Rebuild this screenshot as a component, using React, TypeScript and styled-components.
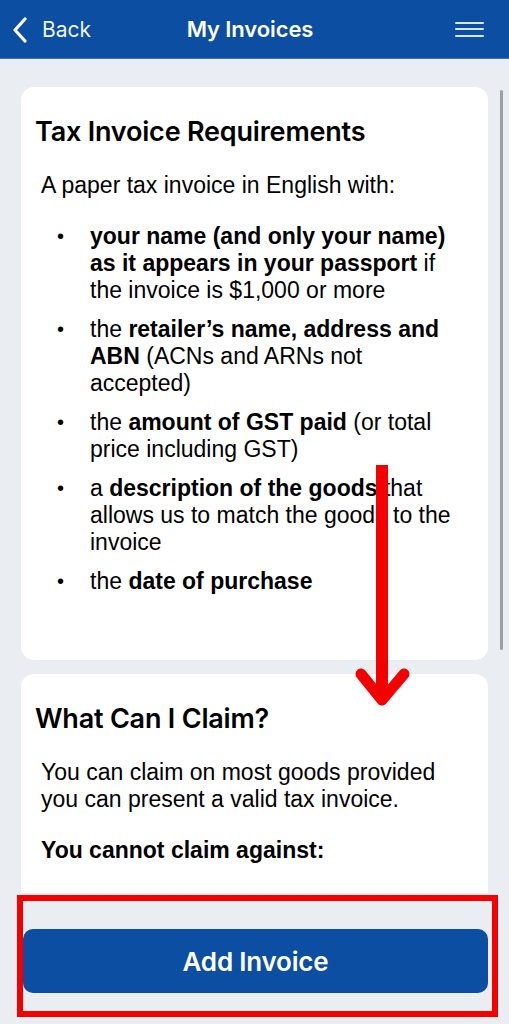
import React from 'react';
import styled, { createGlobalStyle } from 'styled-components';

const GlobalStyle = createGlobalStyle`
    * { box-sizing: border-box; }
    html, body {
        margin: 0;
        padding: 0;
        background: #eaedf1;
    }
`;

const requirements = [
    { lead: '', bold: 'your name (and only your name) as it appears in your passport', tail: ' if the invoice is $1,000 or more' },
    { lead: 'the ', bold: 'retailer\u2019s name, address and ABN', tail: ' (ACNs and ARNs not accepted)' },
    { lead: 'the ', bold: 'amount of GST paid', tail: ' (or total price including GST)' },
    { lead: 'a ', bold: 'description of the goods', tail: ' that allows us to match the goods to the invoice' },
    { lead: 'the ', bold: 'date of purchase', tail: '' },
];

export default function App() {
    return (
        <>
            <GlobalStyle />
            <Screen>
                <TopBar>
                    <BackButton>
                        <svg width="16" height="26" viewBox="0 0 16 26">
                            <polyline points="13,2 3,13 13,24" fill="none" stroke="#fff" strokeWidth="3.2" strokeLinecap="round" strokeLinejoin="round" />
                        </svg>
                        <span>Back</span>
                    </BackButton>
                    <BarTitle>My Invoices</BarTitle>
                    <MenuButton aria-label="menu">
                        <span />
                        <span />
                        <span />
                    </MenuButton>
                </TopBar>

                <Main>
                    <Card $bottom={65}>
                        <CardTitle>Tax Invoice Requirements</CardTitle>
                        <Para>A paper tax invoice in English with:</Para>
                        <List>
                            {requirements.map((r, i) => (
                                <Item key={i}>
                                    {r.lead}<b>{r.bold}</b>{r.tail}
                                </Item>
                            ))}
                        </List>
                    </Card>
                    <Card $bottom={40}>
                        <CardTitle>What Can I Claim?</CardTitle>
                        <Para>You can claim on most goods provided you can present a valid tax invoice.</Para>
                        <Para $bold>You cannot claim against:</Para>
                    </Card>
                    <ScrollThumb />
                </Main>

                <Footer>
                    <Highlight>
                        <AddButton>Add Invoice</AddButton>
                    </Highlight>
                </Footer>

                {/* annotation arrow drawn over the page */}
                <Arrow width="60" height="250" viewBox="0 0 60 250">
                    <line x1="30" y1="0" x2="30" y2="228" stroke="#f50000" strokeWidth="12" />
                    <polyline points="9,209 30,235 52,209" fill="none" stroke="#f50000" strokeWidth="11" strokeLinecap="round" strokeLinejoin="round" />
                </Arrow>
            </Screen>
        </>
    );
}

const Screen = styled.div`
    position: relative;
    width: 509px;
    height: 1024px;
    display: flex;
    flex-direction: column;
    background: #eaedf1;
    overflow: hidden;
`;

const TopBar = styled.header`
    height: 59px;
    flex-shrink: 0;
    background: #0b4ea2;
    display: grid;
    grid-template-columns: 1fr auto 1fr;
    align-items: center;
    padding: 0 25px 0 12px;
    border-bottom: 1px solid #3d72b6;
    font-family: Inter, "Liberation Sans", sans-serif;
    color: #fff;
`;

const BackButton = styled.div`
    display: flex;
    align-items: center;
    gap: 14px;
    font-size: 21px;
    color: #eef3fb;

    svg { margin-top: 1px; }
`;

const BarTitle = styled.div`
    font-size: 22px;
    font-weight: 600;
    letter-spacing: -0.1px;
    padding-left: 4px;
`;

const MenuButton = styled.div`
    justify-self: end;
    display: flex;
    flex-direction: column;
    gap: 4.5px;
    width: 29px;

    span {
        display: block;
        height: 2px;
        border-radius: 1px;
        background: #d9e6fa;
    }
`;

const Main = styled.main`
    position: relative;
    flex: 1;
    overflow: hidden;
    padding: 28px 21px 0 21px;
    display: flex;
    flex-direction: column;
    gap: 14px;
`;

const ScrollThumb = styled.div`
    position: absolute;
    right: 6px;
    top: 31px;
    width: 3px;
    height: 560px;
    border-radius: 2px;
    background: #9c9fa4;
`;

const Card = styled.section<{ $bottom: number }>`
    flex-shrink: 0;
    background: #fff;
    border-radius: 13px;
    padding: 29px 14px ${p => p.$bottom}px 14px;
    color: #000;
`;

const CardTitle = styled.h2`
    margin: 0 0 25px 0;
    font-family: Inter, "Liberation Sans", sans-serif;
    font-size: 27px;
    line-height: 31px;
    font-weight: 600;
    letter-spacing: -0.2px;
`;

const Para = styled.p<{ $bold?: boolean }>`
    margin: 0 14px 24px 6px;
    font-family: "Liberation Sans", Arial, sans-serif;
    font-size: 23px;
    line-height: 27px;
    font-weight: ${p => (p.$bold ? 700 : 400)};
`;

const List = styled.ul`
    list-style: none;
    margin: 0 14px 0 0;
    padding: 0 0 0 55px;
    font-family: "Liberation Sans", Arial, sans-serif;
    font-size: 23px;
    line-height: 27px;
    display: flex;
    flex-direction: column;
    gap: 12px;
`;

const Item = styled.li`
    position: relative;

    &::before {
        content: '\u2022';
        position: absolute;
        left: -33px;
        top: 0;
        font-size: 20px;
    }

    b { font-weight: 700; }
`;

const Footer = styled.footer`
    height: 131px;
    flex-shrink: 0;
    padding: 2px 11px 7px 17px;
    background: #eaedf1;
`;

const Highlight = styled.div`
    height: 122px;
    border: 6px solid #f50000;
    padding: 28px 4px 0 0;
`;

const AddButton = styled.button`
    display: block;
    width: 100%;
    height: 64px;
    border: none;
    border-radius: 10px;
    background: #0b4ea2;
    color: #fff;
    font-family: Inter, "Liberation Sans", sans-serif;
    font-size: 26px;
    font-weight: 600;
    letter-spacing: -0.2px;
`;

const Arrow = styled.svg`
    position: absolute;
    left: 352px;
    top: 465px;
    pointer-events: none;
`;
